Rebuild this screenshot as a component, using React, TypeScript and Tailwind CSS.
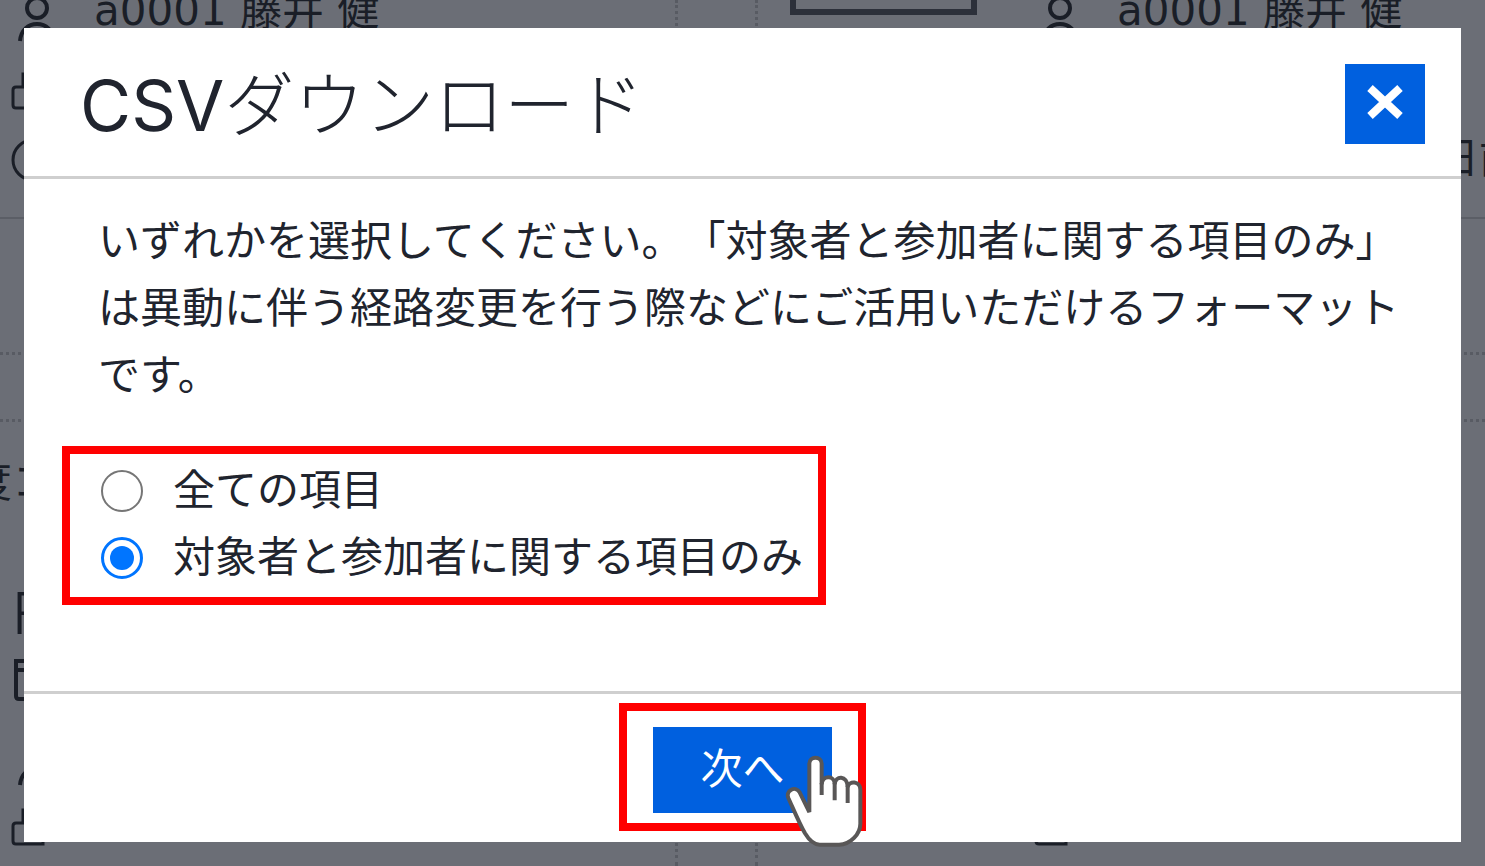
import { useState } from 'react';

const options = [
  { value: 'all', label: '全ての項目' },
  { value: 'members', label: '対象者と参加者に関する項目のみ' },
];

function UserIcon() {
  return (
    <svg viewBox="0 0 44 52" className="h-13 w-11 shrink-0" fill="none" stroke="currentColor" strokeWidth="4">
      <circle cx="27" cy="18" r="10" />
      <path d="M10 51C11 40 18 34 27 34s16 6 17 17" />
    </svg>
  );
}

function BuildingIcon() {
  return (
    <svg viewBox="0 0 44 40" className="h-10 w-11 shrink-0" fill="none" stroke="currentColor" strokeWidth="3">
      <path d="M13 16V4h20v34H6q-3 0-3-3V20q0-3 3-3h8" />
    </svg>
  );
}

function ClockIcon() {
  return (
    <svg viewBox="0 0 44 44" className="size-11 shrink-0" fill="none" stroke="currentColor" strokeWidth="3">
      <circle cx="23" cy="22" r="20" />
      <path d="M23 10v13l8 5" />
    </svg>
  );
}

function CalendarIcon() {
  return (
    <svg viewBox="0 0 44 44" className="size-11 shrink-0" fill="none" stroke="currentColor" strokeWidth="4">
      <path d="M6 3h34v35q0 3-3 3H9q-3 0-3-3zM6 12h34" />
    </svg>
  );
}

function HandCursor() {
  return (
    <svg
      viewBox="550 190 240 282"
      className="pointer-events-none absolute top-[42px] -right-1.5 h-[94px] w-20"
      fill="#fff"
      stroke="#595757"
      strokeWidth="12"
      strokeLinejoin="miter"
      aria-hidden="true"
    >
      <path d="M626 367V222C626 198 663 198 663 222V284C665 256 702 256 702 284C704 256 740 256 741 292C745 272 779 274 779 300V402C779 432 750 465 715 465H657C642 465 628 456 613 431C594 397 576 353 563 325C554 303 584 286 597 308Z" />
      <path d="M663 280V316M702 280V332M741 288V340" fill="none" />
    </svg>
  );
}

function BackgroundPage() {
  return (
    <div className="flex h-full flex-col overflow-hidden bg-[#6b6e76] text-[42px] leading-none text-[#1a1e27]" aria-hidden="true">
      <div className="grid h-[219px] shrink-0 grid-cols-[678px_80px_1fr] border-b-2 border-[#5b5e66]">
        <div className="overflow-hidden border-r-3 border-dotted border-[#585b63] pl-2.5">
          <div className="-mt-2.5 flex items-start gap-10">
            <UserIcon />
            <span>a0001 藤井 健</span>
          </div>
          <div className="mt-7">
            <BuildingIcon />
          </div>
          <div className="mt-7">
            <ClockIcon />
          </div>
        </div>
        <div className="border-r-3 border-dotted border-[#585b63]" />
        <div className="flex gap-14 overflow-hidden pl-8">
          <div className="h-[15px] w-[187px] shrink-0 border-6 border-t-0 border-[#2c303a]" />
          <div className="grow">
            <div className="-mt-2.5 flex items-start gap-10">
              <UserIcon />
              <span>a0001 藤井 健</span>
            </div>
            <div className="mt-24 flex justify-end overflow-hidden">
              <span className="-mr-9 whitespace-nowrap">日前</span>
            </div>
          </div>
        </div>
      </div>
      <div className="h-[136px] shrink-0 border-b-3 border-dotted border-[#585b63]" />
      <div className="h-[67px] shrink-0 border-b-3 border-dotted border-[#585b63]" />
      <div className="grid grow grid-cols-[678px_80px_1fr]">
        <div className="overflow-hidden border-r-3 border-dotted border-[#585b63] pl-2.5">
          <div className="mt-10 -ml-10 whitespace-nowrap">度コース</div>
          <div className="mt-20 pl-0.5 font-['Inter',sans-serif] text-[58px] font-light">F</div>
          <div className="mt-4">
            <CalendarIcon />
          </div>
          <div className="mt-8">
            <UserIcon />
          </div>
          <div className="mt-5">
            <BuildingIcon />
          </div>
        </div>
        <div className="border-r-3 border-dotted border-[#585b63]" />
        <div className="flex items-end pb-5 pl-[275px]">
          <BuildingIcon />
        </div>
      </div>
    </div>
  );
}

export default function App() {
  const [isOpen, setIsOpen] = useState(true);
  const [selected, setSelected] = useState('members');

  return (
    <div className="relative h-screen overflow-hidden font-['DejaVu_Sans','Noto_Sans_CJK_JP',sans-serif]">
      <BackgroundPage />

      {isOpen && (
        <div className="absolute inset-0 px-6 pt-7 pb-6">
          <div role="dialog" aria-modal="true" aria-labelledby="dialog-title" className="bg-white text-[#20242e]">
            <div className="flex items-center justify-between border-b-3 border-[#cfcfcf] pt-9 pr-9 pb-8 pl-14">
              <h1 id="dialog-title" className="pt-1 font-['Inter','Noto_Sans_CJK_JP',sans-serif] text-[70px] leading-[76px]">
                CSV<span className="font-light">ダウンロード</span>
              </h1>
              <button
                type="button"
                aria-label="閉じる"
                onClick={() => setIsOpen(false)}
                className="flex size-20 items-center justify-center bg-[#0060df] pb-1 text-white"
              >
                <svg viewBox="0 0 36 34" className="h-[34px] w-9" fill="none" stroke="currentColor" strokeWidth="8">
                  <path d="M3 3l30 28M33 3L3 31" />
                </svg>
              </button>
            </div>

            <div className="pt-[29px] pb-[86px]">
              <p className="pr-12 pl-[74px] text-[42px] leading-[67px] [text-spacing-trim:space-all]">
                いずれかを選択してください。「対象者と参加者に関する項目のみ」は異動に伴う経路変更を行う際などにご活用いただけるフォーマットです。
              </p>

              <div className="mt-[37px] ml-[38px] w-fit border-8 border-[#ff0000] pt-[3px] pr-[15px] pb-[6px] pl-[31px]">
                {options.map((option) => (
                  <label key={option.value} className="flex items-center gap-[30px] text-[42px] leading-[67px]">
                    <input
                      type="radio"
                      name="format"
                      value={option.value}
                      checked={selected === option.value}
                      onChange={() => setSelected(option.value)}
                      className="size-[42px] shrink-0 appearance-none rounded-full border-2 border-[#767676] bg-white checked:border-3 checked:border-[#0075ff] checked:bg-[#0075ff] checked:bg-clip-content checked:p-[6px]"
                    />
                    {option.label}
                  </label>
                ))}
              </div>
            </div>

            <div className="flex justify-center border-t-3 border-[#cfcfcf] pt-[9px] pb-[11px]">
              <div className="relative border-8 border-[#ff0000] px-[26px] pt-4 pb-[10px]">
                <button type="button" className="block bg-[#0060df] px-[47px] text-[42px] leading-[86px] text-white">
                  次へ
                </button>
                <HandCursor />
              </div>
            </div>
          </div>
        </div>
      )}
    </div>
  );
}
